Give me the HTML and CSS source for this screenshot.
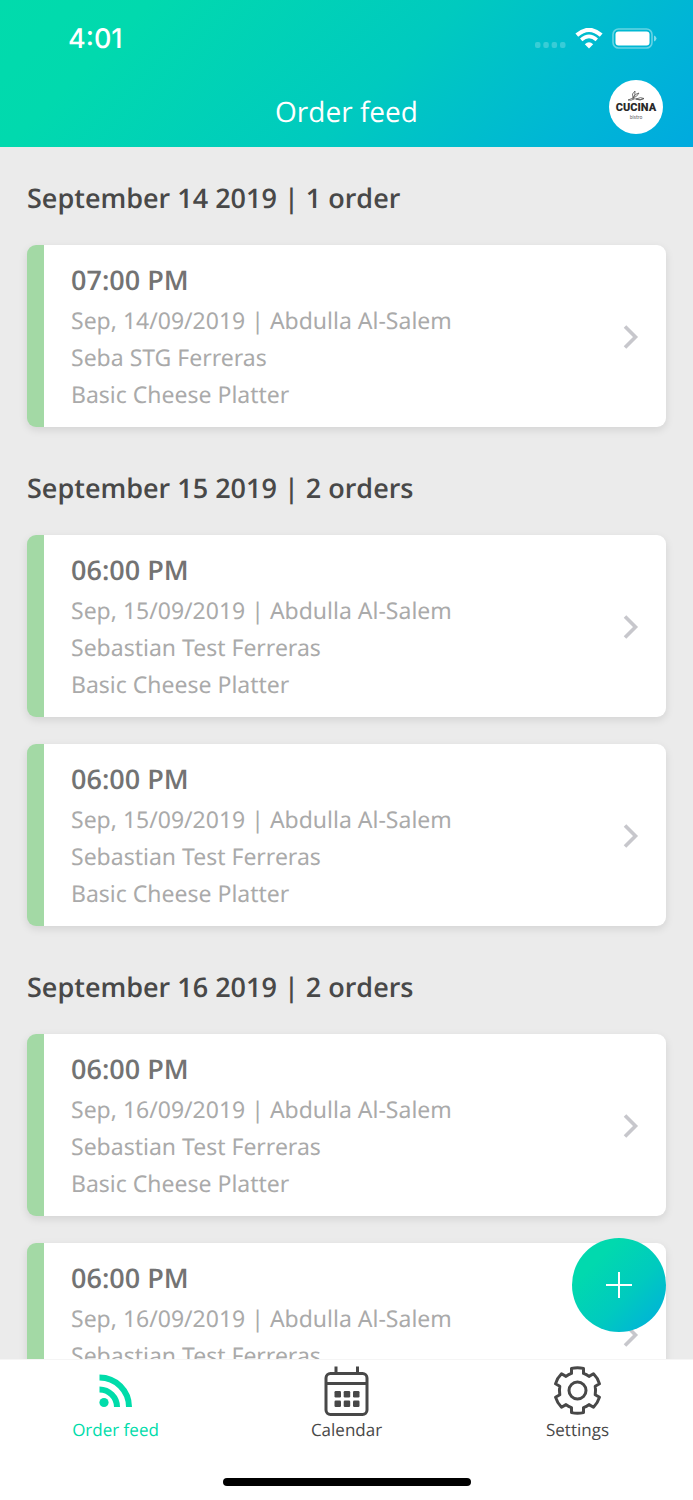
FILE: index.html
```html
<!DOCTYPE html>
<html lang="en">
<head>
<meta charset="utf-8">
<meta name="viewport" content="width=device-width, initial-scale=1">
<title>Order feed</title>
<link rel="stylesheet" href="styles.css">
</head>
<body>
<div class="app">
  <svg class="symbols" aria-hidden="true">
    <symbol id="chevron" viewBox="0 0 16 26"><path d="M2 2.500L12.500 13L2 23.500" fill="none" stroke="#c7c7cc" stroke-width="3.600"/></symbol>
  </svg>
  <header class="header">
    <div class="status">
      <time class="clock">4:01</time>
      <div class="indicators">
        <svg width="32" height="8" viewBox="0 0 32 8" fill="#fff" fill-opacity=".22"><rect x="1" y="1" width="5.500" height="6" rx="2"/><rect x="9.300" y="1" width="5.500" height="6" rx="2"/><rect x="17.600" y="1" width="5.500" height="6" rx="2"/><rect x="26" y="1" width="5.500" height="6" rx="2"/></svg>
        <svg class="wifi" width="28" height="21" viewBox="0 0 28 21" fill="none" stroke="#fff"><path d="M1.800 7.200Q14-3.400 26.200 7.200" stroke-width="4.200"/><path d="M6.200 11.800Q14 5 21.800 11.800" stroke-width="3.600"/><path d="M14 20.500L9.800 16.300Q14 12.300 18.200 16.300Z" fill="#fff" stroke="none"/></svg>
        <svg class="battery" width="45" height="21" viewBox="0 0 45 21"><rect x="1" y="1" width="39" height="19" rx="5.500" fill="none" stroke="#fff" stroke-opacity=".4" stroke-width="1.600"/><rect x="3.500" y="3.500" width="34" height="14" rx="3" fill="#fff"/><path d="M42 7.500Q44.500 8.500 44.500 10.500T42 13.500Z" fill="#fff" fill-opacity=".5"/></svg>
      </div>
    </div>
    <div class="titlebar">
      <h1 class="title">Order feed</h1>
      <button class="avatar" aria-label="Cucina bistro account">
        <svg class="sprig" width="18" height="12" viewBox="0 0 18 12" fill="none" stroke="#555" stroke-width=".8"><path d="M1 10Q5 7.500 9 9T17 8.500Q14 6.500 9 9Q13 11.500 17 8.500M6 8Q4 3.500 8 1Q8.500 5 6 8Q8.500 3 12 3Q10 7 6 8M1 10Q4 11 7 9"/></svg>
        <span class="brand">CUCINA</span>
        <span class="brand-sub">bistro</span>
      </button>
    </div>
  </header>

  <div class="content">
    <main class="feed">
      <section class="day">
        <h2 class="day-title">September 14 2019 | 1 order</h2>
        <a class="card" href="#"><span class="details"><strong class="hour">07:00 PM</strong><span class="line">Sep, 14/09/2019 | Abdulla Al-Salem</span><span class="line">Seba STG Ferreras</span><span class="line">Basic Cheese Platter</span></span><svg class="chevron"><use href="#chevron"/></svg></a>
      </section>
      <section class="day">
        <h2 class="day-title">September 15 2019 | 2 orders</h2>
        <a class="card" href="#"><span class="details"><strong class="hour">06:00 PM</strong><span class="line">Sep, 15/09/2019 | Abdulla Al-Salem</span><span class="line">Sebastian Test Ferreras</span><span class="line">Basic Cheese Platter</span></span><svg class="chevron"><use href="#chevron"/></svg></a>
        <a class="card" href="#"><span class="details"><strong class="hour">06:00 PM</strong><span class="line">Sep, 15/09/2019 | Abdulla Al-Salem</span><span class="line">Sebastian Test Ferreras</span><span class="line">Basic Cheese Platter</span></span><svg class="chevron"><use href="#chevron"/></svg></a>
      </section>
      <section class="day">
        <h2 class="day-title">September 16 2019 | 2 orders</h2>
        <a class="card" href="#"><span class="details"><strong class="hour">06:00 PM</strong><span class="line">Sep, 16/09/2019 | Abdulla Al-Salem</span><span class="line">Sebastian Test Ferreras</span><span class="line">Basic Cheese Platter</span></span><svg class="chevron"><use href="#chevron"/></svg></a>
        <a class="card" href="#"><span class="details"><strong class="hour">06:00 PM</strong><span class="line">Sep, 16/09/2019 | Abdulla Al-Salem</span><span class="line">Sebastian Test Ferreras</span><span class="line">Basic Cheese Platter</span></span><svg class="chevron"><use href="#chevron"/></svg></a>
      </section>
    </main>
    <button class="add" aria-label="Add order"><svg width="28" height="28" viewBox="0 0 28 28" fill="none" stroke="#fff" stroke-width="2"><path d="M14 1V27M1 14H27"/></svg></button>
  </div>

  <footer class="footer">
    <nav class="tabs">
      <a class="tab active" href="#"><svg width="52" height="52" viewBox="0 0 52 52"><circle cx="14" cy="37.500" r="4.600" fill="currentColor"/><path d="M9.500 24.500A17.500 17.500 0 0 1 27 42M9.500 12.500A29.500 29.500 0 0 1 39 42" fill="none" stroke="currentColor" stroke-width="6"/></svg>Order feed</a>
      <a class="tab" href="#"><svg width="52" height="52" viewBox="0 0 52 52" fill="none" stroke="currentColor" stroke-width="3"><rect x="5" y="8.500" width="41" height="41" rx="4.500"/><path d="M5 18.500H46M15 1.500V8M36.500 1.500V8"/><g fill="currentColor" stroke="none"><rect x="13.500" y="26" width="6.500" height="6.500" rx="1.200"/><rect x="22.700" y="26" width="6.500" height="6.500" rx="1.200"/><rect x="32" y="26" width="6.500" height="6.500" rx="1.200"/><rect x="13.500" y="35.500" width="6.500" height="6.500" rx="1.200"/><rect x="22.700" y="35.500" width="6.500" height="6.500" rx="1.200"/><rect x="32" y="35.500" width="6.500" height="6.500" rx="1.200"/></g></svg>Calendar</a>
      <a class="tab" href="#"><svg width="52" height="52" viewBox="0 0 52 52" fill="none" stroke="currentColor" stroke-width="3" stroke-linejoin="round"><circle cx="25.500" cy="25.500" r="8.500"/><path d="M19.500 3.400Q25.500 1.900 31.500 3.400V8.400Q34.500 9.400 37 11.400L41.500 8.800Q45.800 13 47.500 18.800L43.200 21.300Q44 25.500 43.200 29.700L47.500 32.200Q45.800 38 41.500 42.200L37 39.600Q34.500 41.600 31.500 42.600V47.600Q25.500 49.100 19.500 47.600V42.600Q16.500 41.600 14 39.600L9.500 42.200Q5.200 38 3.500 32.200L7.800 29.700Q7 25.500 7.800 21.300L3.500 18.800Q5.200 13 9.500 8.800L14 11.400Q16.500 9.400 19.500 8.400Z"/></svg>Settings</a>
    </nav>
    <div class="home"></div>
  </footer>
</div>
</body>
</html>
```

FILE: styles.css
```css
* { box-sizing: border-box; }
body { margin: 0; font-family: "Open Sans", "Noto Sans", sans-serif; color: #484848; background: #fff; text-rendering: geometricPrecision; }
a { color: inherit; text-decoration: none; }
button { border: 0; padding: 0; font: inherit; cursor: pointer; }
svg { display: block; flex: none; }
.symbols { position: absolute; width: 0; height: 0; }
.app { height: 100vh; display: flex; flex-direction: column; overflow: hidden; }

.header { flex: none; color: #fff; background: linear-gradient(135deg, #01dbac 0%, #01d9ae 18%, #00cabf 55%, #00b5d6 84%, #00aadf 100%); }
.status { display: flex; align-items: center; justify-content: space-between; height: 77px; padding: 0 36px 0 68px; }
.clock { font-family: Inter, sans-serif; font-size: 27px; font-weight: 500; line-height: 32px; }
.indicators { display: flex; align-items: center; }
.indicators > :first-child { margin-top: 12px; }
.wifi { margin: 0 9px; }
.titlebar { display: grid; grid-template-columns: 1fr auto 1fr; align-items: center; padding: 3px 30px 13px; }
.title { grid-column: 2; margin: 0; font-size: 28px; font-weight: 400; line-height: 40px; padding-top: 9px; }
.avatar { justify-self: end; width: 54px; height: 54px; padding-bottom: 4px; border-radius: 50%; background: #fff; color: #292929; display: flex; flex-direction: column; align-items: center; justify-content: center; }
.brand { font-family: Roboto, sans-serif; font-size: 11px; font-weight: 900; line-height: 12px; }
.brand-sub { font-family: Lato, sans-serif; font-size: 5px; line-height: 6px; color: #666; }

.content { position: relative; flex: 1; min-height: 0; background: #ebebeb; }
.feed { height: 100%; overflow: hidden; padding: 0 27px; }
.day { display: flex; flex-direction: column; gap: 27px; margin-bottom: 37px; }
.day:first-child { padding-top: 27px; }
.day-title { margin: 0; padding-top: 4px; font-size: 27px; font-weight: 600; line-height: 40px; }
.card { display: flex; align-items: center; justify-content: space-between; border-left: 17px solid #a3d9a5; border-radius: 9px; background: #fff; padding: 15px 27px 14px; box-shadow: 0 3px 8px rgba(0, 0, 0, .1); }
.details { display: flex; flex-direction: column; font-size: 23px; line-height: 37px; color: #aaa; }
.line { font-family: "Noto Sans", "Open Sans", sans-serif; }
.hour { padding-bottom: 3px; font-size: 27px; font-weight: 600; line-height: 39px; color: #737373; }
.chevron { width: 16px; height: 26px; }
.add { position: absolute; right: 27px; bottom: 27px; width: 94px; height: 94px; border-radius: 50%; display: grid; place-items: center; background: linear-gradient(135deg, #01d9ae 25%, #00cabf 60%, #00b5d6 88%, #00aadf 100%); }

.footer { flex: none; background: #fff; border-top: 1px solid #f5f5f5; }
.tabs { display: grid; grid-template-columns: repeat(3, 1fr); padding-top: 5px; }
.tab { display: flex; flex-direction: column; align-items: center; font-size: 17px; line-height: 26px; }
.active { color: #00dcaa; }
.home { width: 248px; height: 8px; margin: 35px auto 14px; border-radius: 4px; background: #000; }
```
